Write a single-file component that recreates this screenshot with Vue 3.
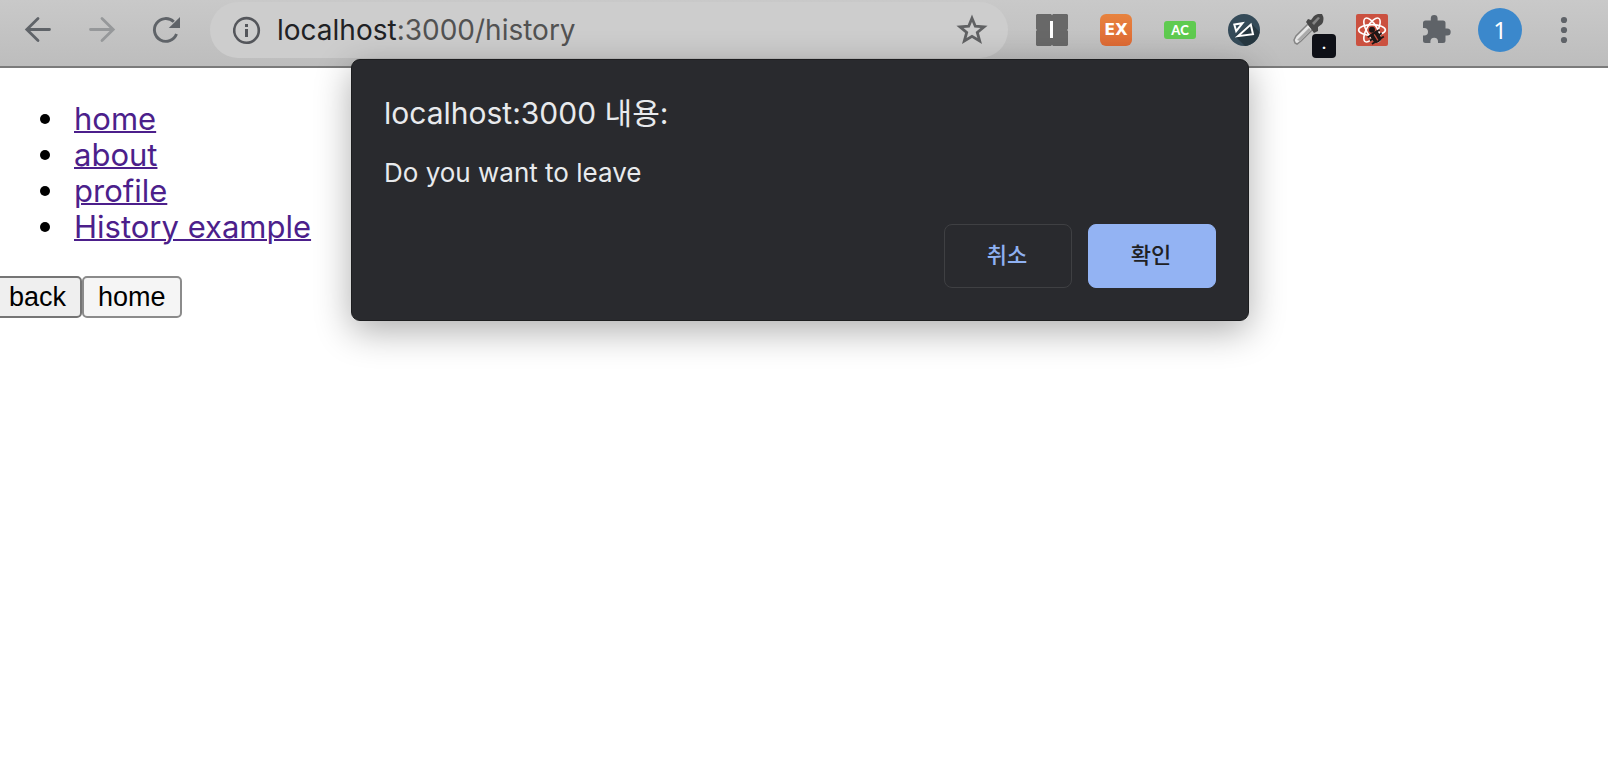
<script setup>
const links = ['home', 'about', 'profile', 'History example']
</script>

<template>
  <div class="window">
    <header class="toolbar">
      <nav class="nav" aria-label="Browser navigation">
        <button class="icon-btn" aria-label="Back">
          <svg viewBox="0 0 32 32" fill="none" stroke="#5f6368" stroke-width="2.8" stroke-linecap="round">
            <path d="M27.5 15.5H5.5M16 4.5 4.8 15.5 16 26.5" />
          </svg>
        </button>
        <button class="icon-btn" aria-label="Forward">
          <svg viewBox="0 0 32 32" fill="none" stroke="#96989a" stroke-width="2.8" stroke-linecap="round">
            <path d="M4.5 15.5H26.5M16 4.5 27.2 15.5 16 26.5" />
          </svg>
        </button>
        <button class="icon-btn" aria-label="Reload">
          <svg viewBox="0 0 32 32">
            <path d="M26.5 20A11.4 11.4 0 1 1 23.8 7.8" fill="none" stroke="#5f6368" stroke-width="2.9" />
            <path d="M30 3V14H18.8Z" fill="#5f6368" />
          </svg>
        </button>
      </nav>

      <div class="omnibox">
        <svg class="info" viewBox="0 0 28 28">
          <circle cx="13.5" cy="14.4" r="12.3" fill="none" stroke="#54565b" stroke-width="2.6" />
          <path d="M12 8h3v2.9h-3zM12 13h3v8h-3z" fill="#54565b" />
        </svg>
        <div class="url"><span class="host">localhost</span>:3000/history</div>
        <button class="icon-btn" aria-label="Bookmark">
          <svg viewBox="0 0 32 32">
            <path d="M16 4.2 19.3 12.2 28 12.8 21.3 18.4 23.7 26.9 16 22.3 8.3 26.9 10.7 18.4 4 12.8 12.7 12.2Z" fill="none" stroke="#606163" stroke-width="2.8" />
          </svg>
        </button>
      </div>

      <div class="extensions">
        <button class="icon-btn" aria-label="Tile extension">
          <svg viewBox="0 0 32 32">
            <path d="M1 0H15L16 1.2 17 0H31L32 1V15L31 16 32 17V31L31 32H17L16 30.8 15 32H1L0 31V17L1 16 0 15V1Z" fill="#686868" />
            <path d="M14 7h3v17h-3z" fill="#fff" />
          </svg>
        </button>
        <button class="icon-btn ex">EX</button>
        <button class="icon-btn"><span class="ac">AC</span></button>
        <button class="icon-btn" aria-label="Set square extension">
          <svg viewBox="0 0 32 32">
            <circle cx="16" cy="16" r="16" fill="#354b59" />
            <path d="M23 9 31.5 18A16 16 0 0 1 17 32L7 22Z" fill="#263740" />
            <path d="M6.3 10.6 14.5 9.2 8.2 17.2ZM9.8 22.2 22.8 10.6 25 20.2Z" fill="none" stroke="#fff" stroke-width="2" />
          </svg>
        </button>
        <button class="icon-btn picker" aria-label="Color picker">
          <svg viewBox="0 0 32 32">
            <path d="M3 29 2 26 4 22 16 10 21 15 9 27 5 30Z" fill="#e6e6e6" stroke="#858585" stroke-width="1.5" />
            <path d="M5 26 17 14 19 16 8 27Z" fill="#aaa" />
            <path d="M14 8 16 5 19 6 22 2Q26-1 30 0 33 5 30 10L26 13 26 17 22 19Z" fill="#484848" />
            <path d="M20 9 26 3 28 4 22 11Z" fill="#858585" />
          </svg>
          <span class="badge">.</span>
        </button>
        <button class="icon-btn" aria-label="React developer tools">
          <svg viewBox="0 0 32 32">
            <rect width="32" height="32" rx="2" fill="#cb5140" />
            <g fill="none" stroke="#fff" stroke-width="1.6">
              <ellipse cx="16" cy="16" rx="13.4" ry="5.4" />
              <ellipse cx="16" cy="16" rx="13.4" ry="5.4" transform="rotate(60 16 16)" />
              <ellipse cx="16" cy="16" rx="13.4" ry="5.4" transform="rotate(120 16 16)" />
            </g>
            <g transform="rotate(-32 19.5 22.5)">
              <path d="M12.5 19h14M12.5 23h14M12.5 27h14" stroke="#1f1716" stroke-width="1.8" />
              <path d="M15 18H24V25Q24 29 19.5 29 15 29 15 25Z" fill="#1f1716" />
              <path d="M19.5 20v7" stroke="#cb5140" stroke-width="1.2" />
            </g>
            <circle cx="16" cy="15.8" r="3" fill="#1f1716" />
          </svg>
        </button>
        <button class="icon-btn" aria-label="Extensions">
          <svg viewBox="0 0 32 32">
            <path d="M5.5 6.5H10.8V4.5A3.4 3.4 0 0 1 17.6 4.5V6.5H23Q25.5 6.5 25.5 9V14.5H27.2A3.5 3.5 0 0 1 27.2 21.5H25.5V26.5Q25.5 29 23 29H18V27.5A3.8 3.8 0 0 0 10.4 27.5V29H5.5Q3 29 3 26.5V21.6H4.2A3.8 3.8 0 0 0 4.2 14H3V9Q3 6.5 5.5 6.5Z" fill="#5f6368" />
          </svg>
        </button>
      </div>

      <button class="avatar" aria-label="Profile 1">1</button>
      <button class="icon-btn" aria-label="Menu">
        <svg viewBox="0 0 32 32" fill="#5f6368">
          <circle cx="16" cy="6" r="3.1" /><circle cx="16" cy="16" r="3.1" /><circle cx="16" cy="26" r="3.1" />
        </svg>
      </button>
    </header>

    <main class="page">
      <ul class="links">
        <li v-for="link in links" :key="link"><a href="#">{{ link }}</a></li>
      </ul>
      <div class="actions">
        <button class="plain pressed">back</button>
        <button class="plain">home</button>
      </div>
    </main>

    <div class="overlay">
      <section class="dialog" role="dialog" aria-labelledby="dialog-title">
        <h1 id="dialog-title">localhost:3000 내용:</h1>
        <p>Do you want to leave</p>
        <div class="choices">
          <button class="choice">취소</button>
          <button class="choice primary">확인</button>
        </div>
      </section>
    </div>
  </div>
</template>

<style>
body {
  background: #fff;
}
</style>

<style scoped>
.window {
  position: relative;
  min-height: 100vh;
  overflow: hidden;
  font-family: Inter, "Noto Sans CJK KR", sans-serif;
}
button {
  font-family: inherit;
}
svg {
  display: block;
  width: 100%;
  height: 100%;
}
.toolbar {
  box-sizing: border-box;
  display: flex;
  align-items: center;
  height: 68px;
  padding: 0 28px 6px 22px;
  background: linear-gradient(#c9c9c9, #bdbdbd);
  border-bottom: 2px solid #7b7b7b;
}
.nav,
.extensions {
  display: flex;
  gap: 32px;
}
.icon-btn {
  flex: none;
  width: 32px;
  height: 32px;
  padding: 0;
  border: 0;
  background: none;
}
.omnibox {
  box-sizing: border-box;
  display: flex;
  flex: 1;
  align-items: center;
  height: 56px;
  margin: 0 28px;
  padding: 0 20px 0 23px;
  border-radius: 28px;
  background: #cdcdcd;
}
.info {
  width: 28px;
  height: 28px;
}
.url {
  flex: 1;
  margin-left: 16px;
  color: #525252;
  font-size: 28px;
  line-height: 36px;
}
.host {
  color: #202124;
}
.ex {
  border-radius: 6px;
  background: linear-gradient(#e7833f, #df6a34);
  color: #fff;
  font: bold 16px/32px "DejaVu Sans", sans-serif;
}
.ac {
  display: block;
  border-radius: 3px;
  background: #5fcb50;
  color: #fff;
  font: 900 13px/18px Lato, sans-serif;
}
.picker {
  position: relative;
}
.badge {
  position: absolute;
  top: 20px;
  left: 20px;
  width: 24px;
  height: 24px;
  border-radius: 4px;
  background: #0e1017;
  color: #fff;
  font: bold 16px/20px Roboto, sans-serif;
}
.avatar {
  flex: none;
  width: 44px;
  height: 44px;
  margin: 0 26px;
  padding: 0;
  border: 0;
  border-radius: 50%;
  background: #3b88cc;
  color: #fff;
  font: 24px/44px "Noto Sans", sans-serif;
}
.page {
  padding-top: 33px;
}
.links {
  margin: 0;
  padding-left: 40px;
  font-size: 31px;
  line-height: 36px;
  list-style: none;
}
.links li {
  display: flex;
  align-items: center;
  gap: 24px;
}
.links li::before {
  width: 10px;
  height: 10px;
  border-radius: 50%;
  background: #000;
  content: "";
}
.links a {
  color: #4c1f8b;
  text-decoration-thickness: 2px;
}
.actions {
  display: flex;
  margin: 31px 0 0 -7px;
}
.plain {
  height: 42px;
  padding: 0 14px;
  border: 2px solid #8b8b8b;
  border-radius: 5px;
  background: #f5f5f5;
  color: #000;
  font: 27px/36px "Liberation Sans", sans-serif;
}
.pressed {
  border-color: #757575;
  background: #efefef;
}
.overlay {
  position: absolute;
  top: 59px;
  right: 8px;
  left: 0;
  display: flex;
  justify-content: center;
}
.dialog {
  box-sizing: border-box;
  width: 898px;
  padding: 33px 32px 32px;
  border: 1px solid #1c1d1f;
  border-radius: 9px;
  background: #292a2e;
  color: #e8eaed;
  box-shadow: 0 10px 36px rgba(0, 0, 0, 0.32);
}
.dialog h1 {
  margin: 0;
  font-size: 30px;
  font-weight: 400;
  line-height: 40px;
}
.dialog p {
  margin: 24px 0 35px;
  font-size: 26px;
  line-height: 32px;
}
.choices {
  display: flex;
  justify-content: flex-end;
  gap: 16px;
}
.choice {
  width: 128px;
  height: 64px;
  padding: 0 2px 6px 0;
  border: 1px solid #3f4043;
  border-radius: 8px;
  background: none;
  color: #8fb1f2;
  font: 500 22px/32px "Noto Sans CJK KR", sans-serif;
}
.primary {
  border-color: #93b3f3;
  background: #93b3f3;
  color: #202124;
}
</style>
